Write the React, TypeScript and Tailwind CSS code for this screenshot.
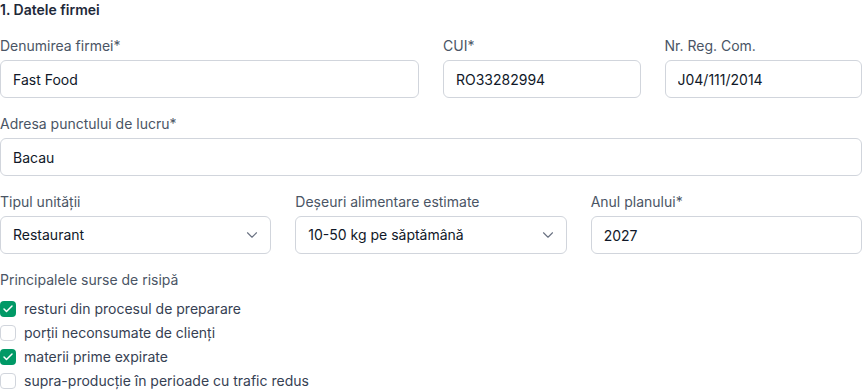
import { ChevronDown, Check } from "lucide-react";

const inputCls =
  "w-full h-[38px] rounded-md border border-gray-300 bg-white px-3 text-sm text-gray-900 focus:outline-none";

function Field({ label, value, className = "" }: { label: string; value: string; className?: string }) {
  return (
    <div className={className}>
      <label className="mb-1 block text-sm leading-5 text-gray-600">{label}</label>
      <input className={inputCls} defaultValue={value} />
    </div>
  );
}

function SelectField({ label, value }: { label: string; value: string }) {
  return (
    <div>
      <label className="mb-1 block text-sm leading-5 text-gray-600">{label}</label>
      <div className="relative">
        <select className={inputCls + " appearance-none pr-10"} defaultValue={value}>
          <option>{value}</option>
        </select>
        <ChevronDown
          size={18}
          strokeWidth={1.5}
          className="pointer-events-none absolute right-2.5 top-1/2 -translate-y-1/2 text-gray-500"
        />
      </div>
    </div>
  );
}

const sources = [
  { text: "resturi din procesul de preparare", checked: true },
  { text: "porții neconsumate de clienți", checked: false },
  { text: "materii prime expirate", checked: true },
  { text: "supra-producție în perioade cu trafic redus", checked: false },
];

export default function App() {
  return (
    <div className="w-[862px] bg-white font-['Inter',sans-serif]">
      <h2 className="mb-4 text-sm leading-5 font-semibold text-gray-800">1. Datele firmei</h2>

      <div className="space-y-4">
        <div className="grid grid-cols-4 gap-6">
          <Field label="Denumirea firmei*" value="Fast Food" className="col-span-2" />
          <Field label="CUI*" value="RO33282994" />
          <Field label="Nr. Reg. Com." value="J04/111/2014" />
        </div>

        <Field label="Adresa punctului de lucru*" value="Bacau" />

        <div className="grid grid-cols-3 gap-6">
          <SelectField label="Tipul unității" value="Restaurant" />
          <SelectField label="Deșeuri alimentare estimate" value="10-50 kg pe săptămână" />
          <Field label="Anul planului*" value="2027" />
        </div>

        <div>
          <p className="mb-[9px] text-sm leading-5 text-gray-600">Principalele surse de risipă</p>
          <div className="space-y-1">
            {sources.map((s) => (
              <label key={s.text} className="flex h-5 items-center gap-2 text-sm text-gray-700">
                {s.checked ? (
                  <span className="flex size-4 items-center justify-center rounded bg-emerald-600">
                    <Check size={12} strokeWidth={3} className="text-white" />
                  </span>
                ) : (
                  <span className="size-4 rounded border border-gray-300 bg-white" />
                )}
                {s.text}
              </label>
            ))}
          </div>
        </div>
      </div>
    </div>
  );
}
